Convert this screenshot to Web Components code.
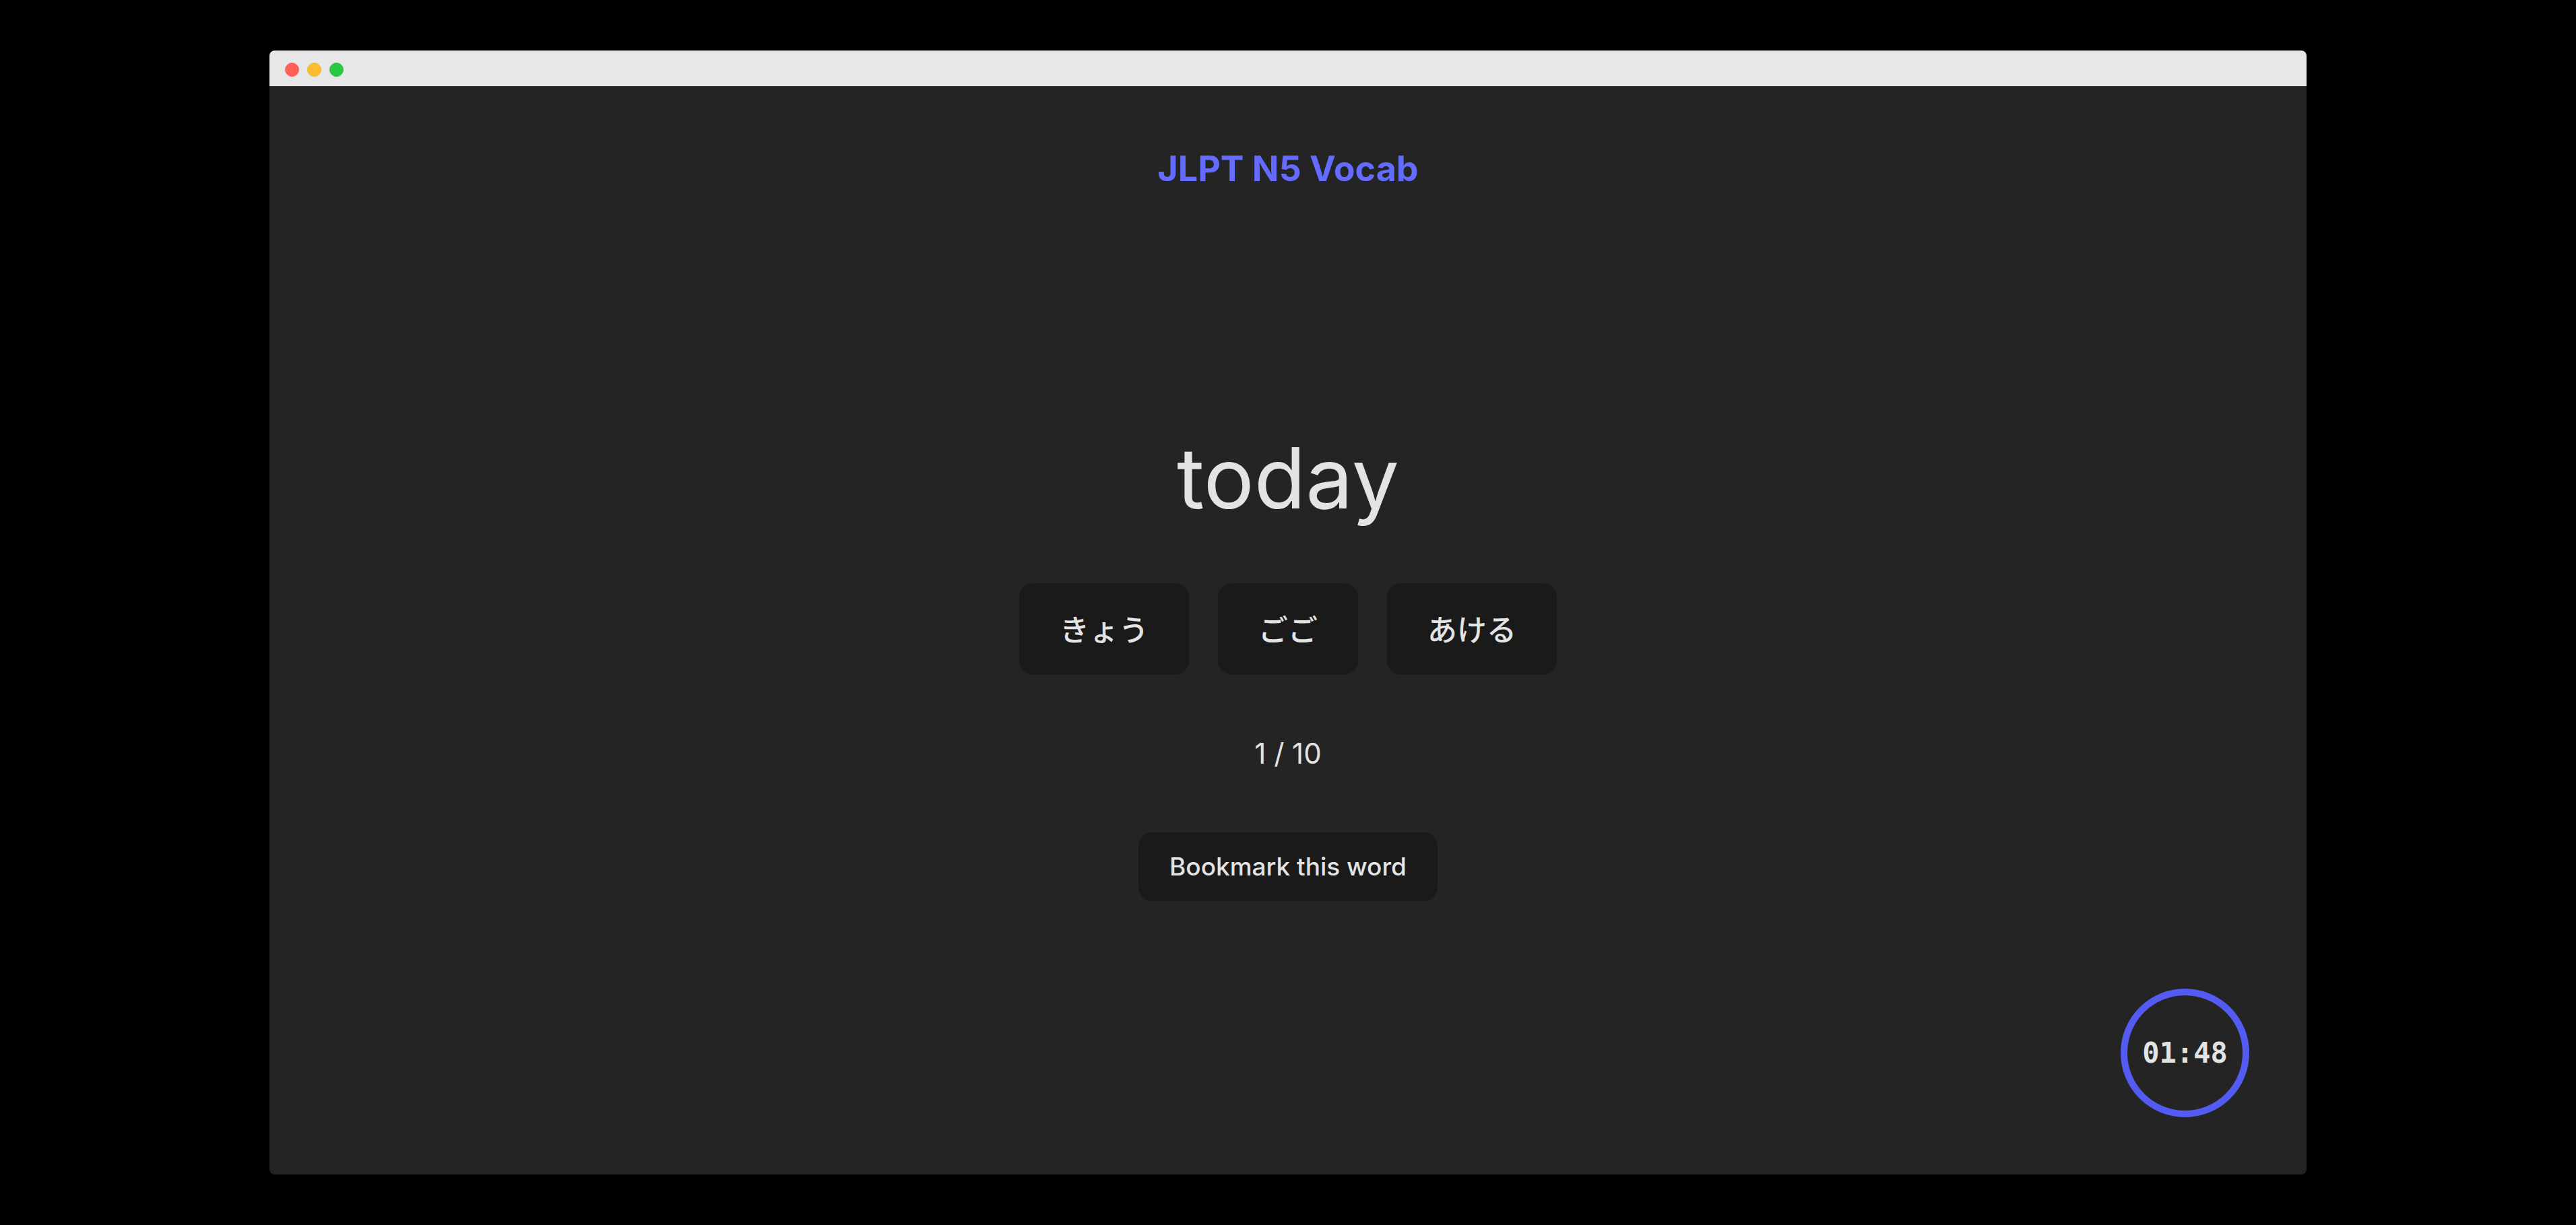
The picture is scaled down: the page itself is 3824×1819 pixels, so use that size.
<!DOCTYPE html>
<html lang="en">
<head>
<meta charset="utf-8">
<title>JLPT N5 Vocab</title>
<style>
  body { margin: 0; background: #000; color: #e3e3e3; font-family: Inter, "Noto Sans CJK JP", sans-serif; }
</style>
</head>
<body>
<desktop-window>
  <vocab-quiz heading="JLPT N5 Vocab" word="today" progress="1 / 10">
    <quiz-button slot="answers" size="large" lang="ja">きょう</quiz-button>
    <quiz-button slot="answers" size="large" lang="ja">ごご</quiz-button>
    <quiz-button slot="answers" size="large" lang="ja">あける</quiz-button>
    <quiz-button slot="bookmark">Bookmark this word</quiz-button>
    <round-timer slot="timer">01:48</round-timer>
  </vocab-quiz>
</desktop-window>
<script>
  class ShadowElement extends HTMLElement {
    connectedCallback() {
      if (!this.shadowRoot) this.attachShadow({ mode: "open" }).innerHTML = this.view();
    }
  }

  customElements.define("desktop-window", class extends ShadowElement {
    view() {
      return `
        <style>
          :host { display: flex; box-sizing: border-box; min-height: 100vh; padding: 75px calc(50% - min(1512px, 50%)); }
          .frame { flex: 1; display: flex; flex-direction: column; border-radius: 8px; overflow: hidden; background: #242424; }
          header { display: flex; align-items: center; gap: 12px; height: 53px; padding: 4px 23px 0; box-sizing: border-box; background: #e7e7e7; }
          i { width: 21px; height: 21px; border-radius: 50%; box-sizing: border-box; border: 1px solid; }
          .close { background: #ff5f57; border-color: #f2655e; }
          .minimise { background: #ffbd2e; border-color: #efb23e; }
          .zoom { background: #28c940; border-color: #2fba44; }
        </style>
        <div class="frame">
          <header><i class="close"></i><i class="minimise"></i><i class="zoom"></i></header>
          <slot></slot>
        </div>`;
    }
  });

  customElements.define("vocab-quiz", class extends ShadowElement {
    view() {
      return `
        <style>
          :host { flex: 1; display: flex; flex-direction: column; padding: 85px; }
          main { display: flex; flex-direction: column; align-items: center; gap: 85px; }
          h1, p { margin: 0; }
          h1 { margin: 6px 0 264px; font-size: 52px; line-height: 64px; font-weight: 700; color: #646cff; }
          .question { display: flex; flex-direction: column; align-items: center; gap: 78px; }
          .word { font-size: 125px; line-height: 156px; }
          .answers { display: flex; flex-wrap: wrap; justify-content: center; gap: 43px; }
          .progress { font-size: 42px; line-height: 64px; }
          footer { display: flex; justify-content: flex-end; margin-top: auto; }
        </style>
        <main>
          <h1>${this.getAttribute("heading")}</h1>
          <div class="question">
            <p class="word">${this.getAttribute("word")}</p>
            <div class="answers"><slot name="answers"></slot></div>
          </div>
          <p class="progress">${this.getAttribute("progress")}</p>
          <slot name="bookmark"></slot>
        </main>
        <footer><slot name="timer"></slot></footer>`;
    }
  });

  customElements.define("quiz-button", class extends ShadowElement {
    view() {
      return `
        <style>
          :host { display: block; }
          button { display: block; margin: 0; padding: 27px 46px; border: 0; border-radius: 21px; background: #1a1a1a; color: inherit; font: 500 37px/48px Inter, "Noto Sans CJK JP", sans-serif; cursor: pointer; }
          :host([size="large"]) button { padding: 38px 60px 34px; font-size: 44px; line-height: 64px; }
          button:hover { box-shadow: 0 0 0 3px #646cff; }
        </style>
        <button type="button"><slot></slot></button>`;
    }
  });

  customElements.define("round-timer", class extends ShadowElement {
    view() {
      return `
        <style>
          :host { display: flex; align-items: center; justify-content: center; box-sizing: border-box; width: 191px; height: 191px; border: 10px solid #535bf2; border-radius: 50%; font: 700 42px/50px "DejaVu Sans Mono", monospace; }
        </style>
        <slot></slot>`;
    }
  });
</script>
</body>
</html>
